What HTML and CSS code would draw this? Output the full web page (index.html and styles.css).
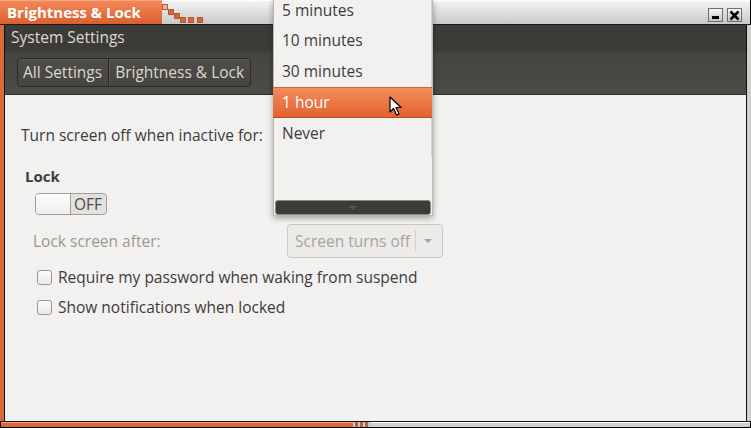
FILE: index.html
```html
<!DOCTYPE html>
<html lang="en">
<head>
    <meta charset="UTF-8">
    <title>Brightness &amp; Lock</title>
    <link rel="stylesheet" href="styles.css">
</head>
<body>
    <div class="window">
        <div class="titlebar">
            <div class="title-tab">Brightness &amp; Lock</div>
            <div class="title-rest"></div>
            <span class="step s1"></span>
            <span class="step s2"></span>
            <span class="step s3"></span>
            <span class="step s4"></span>
            <span class="step s5"></span>
            <span class="step s6"></span>
            <div class="wm-buttons">
                <div class="wm-btn"><span class="min-bar"></span></div>
                <div class="wm-btn">
                    <svg width="11" height="11" viewBox="0 0 11 11"><path d="M1.5 1.5 L9.5 9.5 M9.5 1.5 L1.5 9.5" stroke="#000" stroke-width="2.6"/></svg>
                </div>
            </div>
        </div>

        <div class="frame">
            <div class="header">
                <div class="app-title">System Settings</div>
                <div class="crumbs">
                    <span class="crumb">All Settings</span>
                    <span class="crumb">Brightness &amp; Lock</span>
                </div>
            </div>

            <div class="content">
                <div class="row-inactive">Turn screen off when inactive for:</div>

                <div class="section-title">Lock</div>
                <div class="switch">
                    <span class="knob"></span>
                    <span class="switch-label">OFF</span>
                </div>

                <div class="row-after">
                    <span class="label-disabled">Lock screen after:</span>
                    <div class="combo disabled">
                        <span class="combo-text">Screen turns off</span>
                        <span class="combo-sep"></span>
                        <span class="combo-arrow"></span>
                    </div>
                </div>

                <label class="check-row"><span class="checkbox"></span>Require my password when waking from suspend</label>
                <label class="check-row"><span class="checkbox"></span>Show notifications when locked</label>
            </div>
        </div>

        <div class="bottom-border">
            <div class="bottom-orange"></div>
            <div class="bottom-grip"><i></i><i></i><i></i></div>
            <div class="bottom-gray"></div>
        </div>

        <!-- open combo popup -->
        <div class="menu">
            <div class="menu-list">
                <div class="menu-item first">5 minutes</div>
                <div class="menu-item">10 minutes</div>
                <div class="menu-item">30 minutes</div>
                <div class="menu-item active">1 hour</div>
                <div class="menu-item">Never</div>
            </div>
            <div class="menu-scroll"><span></span></div>
        </div>

        <svg class="cursor" width="14" height="21" viewBox="0 0 14 21">
            <path d="M1 1 L1 16 L4.5 12.5 L7.5 19 L10 18 L7 11.5 L12 11.5 Z" fill="#fff" stroke="#000" stroke-width="1.2" stroke-linejoin="round"/>
        </svg>
    </div>
</body>
</html>
```
FILE: styles.css
```css
* {
    box-sizing: border-box;
}
body {
    margin: 0;
    background: #000;
    font-family: "Open Sans", "Noto Sans", sans-serif;
    font-size: 15.5px;
    color: #3c3c3c;
}
.window {
    position: relative;
    width: 751px;
    height: 428px;
    overflow: hidden;
    background: #000;
}

/* title bar */
.titlebar {
    position: relative;
    display: flex;
    height: 25px;
    border-bottom: 1px solid #1a1a1a;
}
.title-tab {
    width: 162px;
    padding-left: 7px;
    line-height: 23px;
    font-weight: bold;
    font-size: 15px;
    color: #fff;
    background: linear-gradient(#f2885a, #dc5f2c);
    border-top: 1px solid #f8a47c;
}
.title-rest {
    flex: 1;
    background: linear-gradient(#f4f4f4, #c8c8c8);
    border-top: 1px solid #fff;
    margin-right: 1px;
}
.step {
    position: absolute;
    width: 6px;
    height: 6px;
    background: #d8652f;
    border: 1px solid #b85a32;
}
.s1 { left: 162px; top: 4px; background: #e5b79e; }
.s2 { left: 168px; top: 9px; }
.s3 { left: 174px; top: 13px; }
.s4 { left: 180px; top: 17px; }
.s5 { left: 188px; top: 17px; }
.s6 { left: 197px; top: 17px; }
.wm-buttons {
    position: absolute;
    right: 9px;
    top: 8px;
    display: flex;
    gap: 4px;
}
.wm-btn {
    width: 15px;
    height: 14px;
    display: flex;
    align-items: center;
    justify-content: center;
    background: linear-gradient(#f6f6f6, #c4c4c4);
    border: 1px solid #6e6e6e;
}
.min-bar {
    width: 7px;
    height: 3px;
    margin-top: 5px;
    background: #000;
}

/* frame */
.frame {
    height: 396px;
    border-left: 5px solid #d7693b;
    border-right: 5px solid #cfcfcf;
    display: flex;
    flex-direction: column;
}
.header {
    height: 70px;
    padding: 0 0 0 6px;
    background: linear-gradient(#3c3b37 0, #3c3b37 26px, #45443f 27px, #4d4b46 70px);
    border-left: 1px solid #111;
    border-right: 1px solid #111;
    border-bottom: 1px solid #2e2d2a;
    margin: 0 -1px;
}
.app-title {
    height: 25px;
    line-height: 25px;
    color: #dcd8cf;
}
.crumbs {
    display: inline-flex;
    margin: 8px 0 0 6px;
    height: 29px;
    border: 1px solid #2b2a27;
    border-radius: 4px;
    background: linear-gradient(#4e4d48, #45443f);
    box-shadow: inset 0 1px 0 #5a5954;
}
.crumb {
    padding: 0 6px 0 5px;
    line-height: 27px;
    color: #dcd8cf;
}
.crumb + .crumb {
    padding: 0 6px;
    border-left: 1px solid #2b2a27;
    box-shadow: inset 1px 0 0 #575651;
}

.content {
    flex: 1;
    background: #f2f1f0;
    padding: 25px 16px 0 16px;
    border-left: 1px solid #111;
    border-right: 1px solid #111;
    margin: 0 -1px;
}
.row-inactive {
    height: 30px;
    line-height: 30px;
}
.section-title {
    margin-top: 16px;
    margin-left: 4px;
    line-height: 20px;
    font-weight: bold;
    font-size: 15px;
}
.switch {
    display: flex;
    margin: 7px 0 0 14px;
    width: 72px;
    height: 22px;
    border: 1px solid #a29e98;
    border-radius: 4px;
    background: #e3e1de;
}
.knob {
    width: 35px;
    border-right: 1px solid #a29e98;
    border-radius: 3px 0 0 3px;
    background: linear-gradient(#fdfdfd, #efeeec);
}
.switch-label {
    padding-left: 3px;
    line-height: 20px;
    color: #4a4a4a;
}
.row-after {
    display: flex;
    align-items: center;
    margin-top: 9px;
    padding-left: 12px;
}
.label-disabled {
    width: 254px;
    color: #9c988f;
}
.combo {
    display: flex;
    align-items: center;
    width: 156px;
    height: 34px;
    padding-left: 7px;
    border: 1px solid #cbc7c1;
    border-radius: 4px;
    background: #ecebe9;
}
.combo-text {
    color: #a8a49c;
}
.combo-sep {
    width: 1px;
    height: 22px;
    margin-left: 5px;
    background: #d6d3ce;
}
.combo-arrow {
    margin-left: 8px;
    border-left: 4px solid transparent;
    border-right: 4px solid transparent;
    border-top: 4px solid #a8a49c;
}
.check-row {
    display: flex;
    align-items: center;
    height: 30px;
    padding-left: 16px;
}
.row-after + .check-row {
    margin-top: 4px;
}
.checkbox {
    width: 15px;
    height: 15px;
    margin-right: 6px;
    border: 1px solid #9c9891;
    border-radius: 3px;
    background: linear-gradient(#fbfbfb, #ecebea);
}

/* bottom border */
.bottom-border {
    display: flex;
    height: 6px;
    margin: 0 1px;
    border-top: 1px solid #111;
}
.bottom-orange {
    width: 352px;
    background: #d7693b;
    border-top: 1px solid #f0a07a;
}
.bottom-grip {
    display: flex;
    gap: 2px;
    width: 18px;
    padding: 0 2px;
    background: #c8c8c8;
}
.bottom-grip i {
    width: 3px;
    background: #b8603a;
}
.bottom-gray {
    flex: 1;
    background: #cfcfcf;
    border-top: 1px solid #fff;
}

/* popup menu */
.menu {
    position: absolute;
    left: 273px;
    top: 0;
    width: 160px;
    height: 216px;
    background: #f2f1f0;
    border: 1px solid #bcb8b1;
    border-top: none;
    box-shadow: 0 2px 6px rgba(0, 0, 0, 0.35);
}
.menu-list {
    height: 156px;
    border-right: 1px solid #d4d1cc;
}
.menu-item {
    height: 31px;
    line-height: 31px;
    padding-left: 8px;
    color: #3c3c3c;
}
.menu-item.first {
    height: 25px;
    line-height: 21px;
}
.menu-item.active {
    color: #fff;
    background: linear-gradient(#f28c5c, #e2622f);
    border-top: 1px solid #d0653a;
    border-bottom: 1px solid #b84e22;
    margin: 0 -1px;
    padding-left: 9px;
    line-height: 29px;
}
.menu-scroll {
    height: 15px;
    margin: 44px 1px 0 1px;
    border: 1px solid #8c8984;
    border-radius: 3px;
    background: #3c3b37;
    display: flex;
    justify-content: center;
    align-items: center;
}
.menu-scroll span {
    border-left: 5px solid transparent;
    border-right: 5px solid transparent;
    border-top: 4px solid #55534e;
}
.cursor {
    position: absolute;
    left: 389px;
    top: 96px;
}
```
